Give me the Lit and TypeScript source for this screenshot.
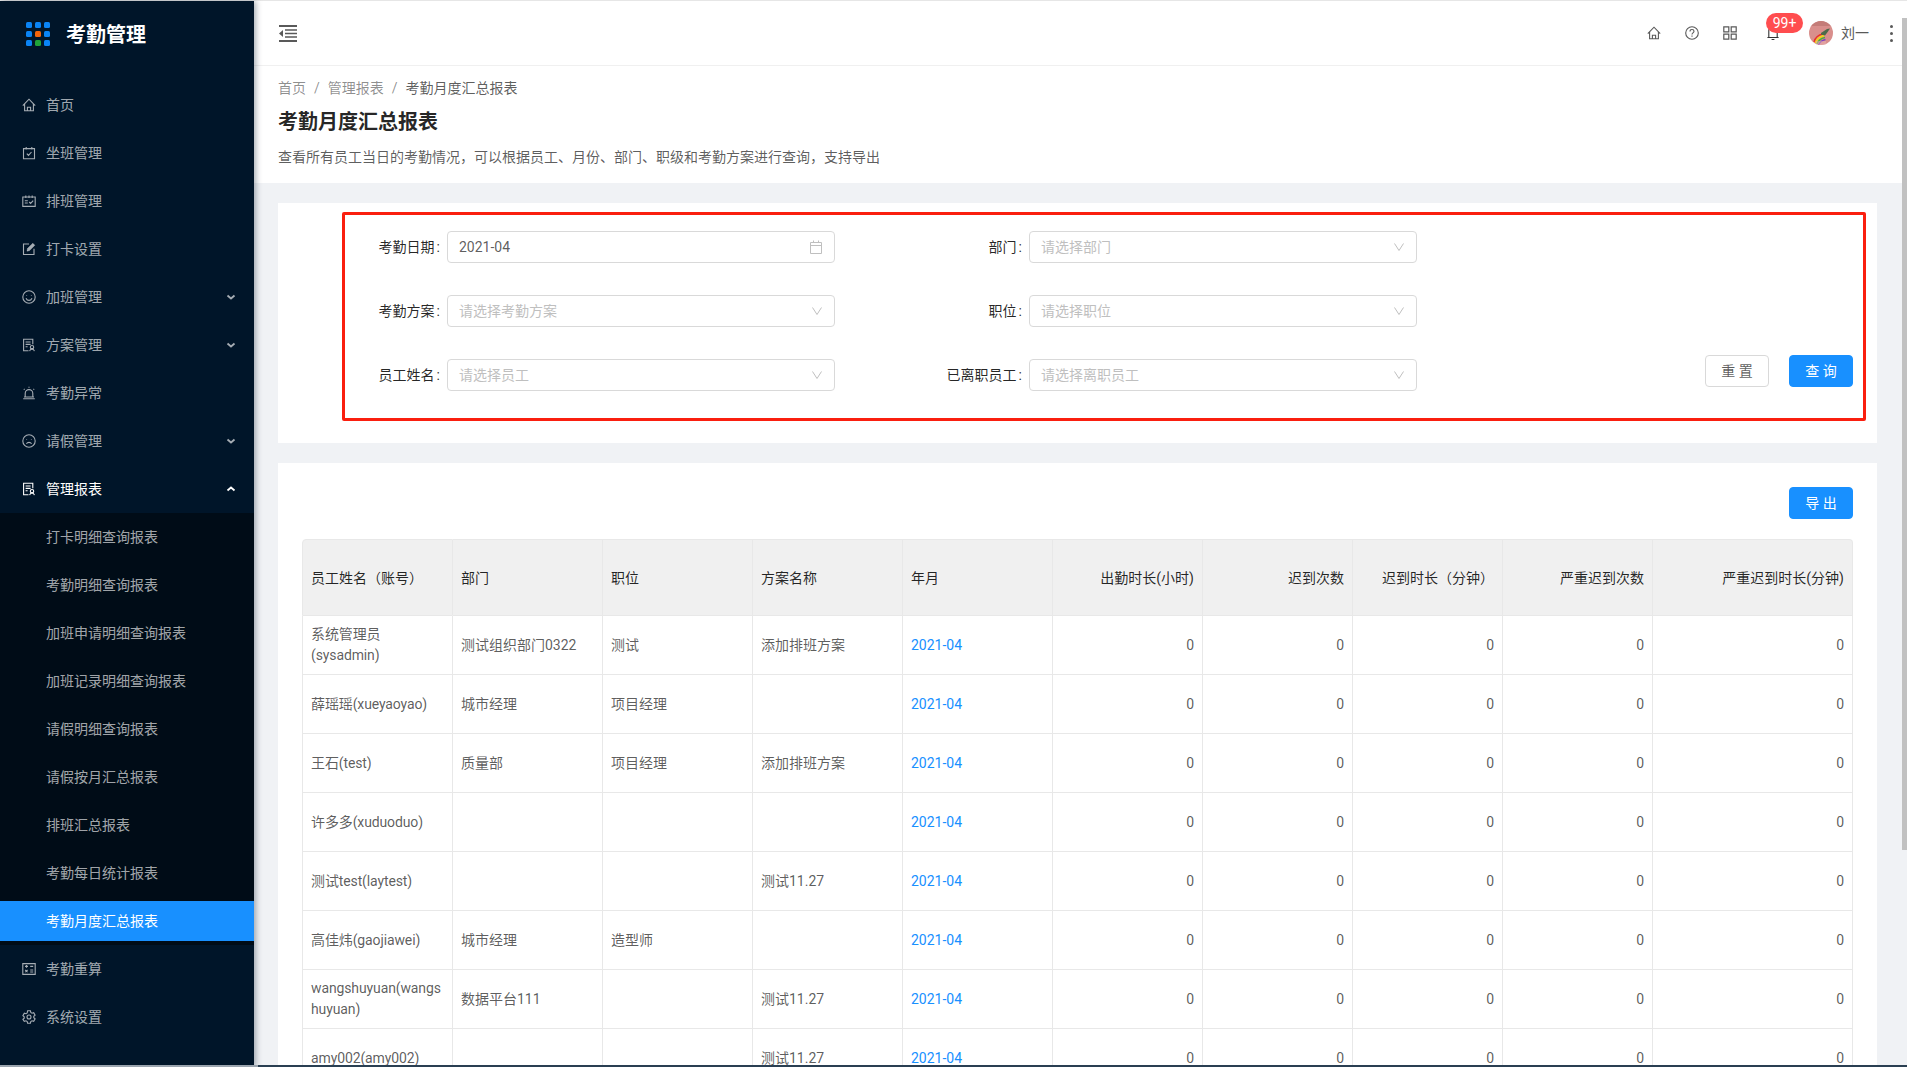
import { LitElement, css, html, svg } from "lit";
import { customElement } from "lit/decorators.js";

const icons: Record<string, unknown> = {
  home: svg`<path d="M.8 7.6 7 1.2l6.200 6.400M2.600 6v6.800h8.800V6M5.400 12.800V9.200h3.200v3.600"/>`,
  sit: svg`<path d="M1.500 2.600h11v10.200h-11zM4.200 1v2.600M9.800 1v2.600M4.800 7.600l1.700 1.800 3-3.400"/>`,
  shift: svg`<path d="M.8 3h12.400v9.400H.8zM3.800 1.400V4M7 1.400V4M10.200 1.400V4M2.800 6.800h3M2.800 9h3M7.200 8l1.400 1.400 2.600-2.800"/>`,
  edit: svg`<path d="M12 6.800v5.700H1.500V2H7"/><path d="M5 9.200l.5-2.700L10.800 1.200l2 2-5.200 5.400z" fill="currentColor" stroke-width=".4"/>`,
  smile: svg`<circle cx="7" cy="7" r="6.200"/><path d="M4 8.200c.7 1.500 1.800 2.200 3 2.200s2.300-.7 3-2.200M4.600 5.200v.6M9.400 5.200v.6"/>`,
  frown: svg`<circle cx="7" cy="7" r="6.200"/><path d="M4.400 9.800c.6-.9 1.500-1.400 2.600-1.400s2 .5 2.600 1.400M4.600 5.400v.6M9.400 5.400v.6"/>`,
  doc: svg`<path d="M6.500 12.800H1.600V1.200h9.200v5M3.600 4h5M3.600 6.400h5M3.600 8.800h2"/><circle cx="10" cy="9.200" r="1.700"/><path d="M7.600 13.200c.3-1.400 1.200-2.200 2.400-2.200s2.100.8 2.400 2.200"/>`,
  alarm: svg`<path d="M3.200 11V7.400a3.800 3.800 0 0 1 7.600 0V11M1.200 12.800h11.600M2 11h10M7 .8v1M1.800 3l.8.7M12.200 3l-.8.7"/>`,
  calc: svg`<path d="M.8 1.600h12.400v10.800H.8zM3 4.400h3M4.500 3v2.800M8.200 4.400h3M3.200 8l2.400 2.200M5.600 8l-2.400 2.200M8.200 8h3M8.200 10h3"/>`,
  gear: svg`<path d="M5.600 1h2.800l.4 1.700 1.200.7 1.700-.5 1.400 2.400-1.300 1.200v1.400l1.300 1.200-1.400 2.400-1.700-.5-1.200.7-.4 1.700H5.600l-.4-1.700-1.200-.7-1.700.5L.9 9.600l1.300-1.200V7L.9 5.800l1.400-2.400 1.700.5 1.200-.7z" transform="translate(0 -.2)"/><circle cx="7" cy="7" r="2"/>`,
};

const menu = [
  { label: "首页", icon: "home" },
  { label: "坐班管理", icon: "sit" },
  { label: "排班管理", icon: "shift" },
  { label: "打卡设置", icon: "edit" },
  { label: "加班管理", icon: "smile", arrow: "down" },
  { label: "方案管理", icon: "doc", arrow: "down" },
  { label: "考勤异常", icon: "alarm" },
  { label: "请假管理", icon: "frown", arrow: "down" },
  { label: "管理报表", icon: "doc", arrow: "up", open: true },
];

const subMenu = [
  "打卡明细查询报表",
  "考勤明细查询报表",
  "加班申请明细查询报表",
  "加班记录明细查询报表",
  "请假明细查询报表",
  "请假按月汇总报表",
  "排班汇总报表",
  "考勤每日统计报表",
  "考勤月度汇总报表",
];

const menuEnd = [
  { label: "考勤重算", icon: "calc" },
  { label: "系统设置", icon: "gear" },
];

const columns = [
  "员工姓名（账号）",
  "部门",
  "职位",
  "方案名称",
  "年月",
  "出勤时长(小时)",
  "迟到次数",
  "迟到时长（分钟）",
  "严重迟到次数",
  "严重迟到时长(分钟)",
];

const rows = [
  ["系统管理员(sysadmin)", "测试组织部门0322", "测试", "添加排班方案"],
  ["薛瑶瑶(xueyaoyao)", "城市经理", "项目经理", ""],
  ["王石(test)", "质量部", "项目经理", "添加排班方案"],
  ["许多多(xuduoduo)", "", "", ""],
  ["测试test(laytest)", "", "", "测试11.27"],
  ["高佳炜(gaojiawei)", "城市经理", "造型师", ""],
  ["wangshuyuan(wangshuyuan)", "数据平台111", "", "测试11.27"],
  ["amy002(amy002)", "", "", "测试11.27"],
];

const filters = [
  { label: "考勤日期", value: "2021-04", kind: "date" },
  { label: "部门", placeholder: "请选择部门" },
  { label: "考勤方案", placeholder: "请选择考勤方案" },
  { label: "职位", placeholder: "请选择职位" },
  { label: "员工姓名", placeholder: "请选择员工" },
  { label: "已离职员工", placeholder: "请选择离职员工" },
];

@customElement("app-root")
export class AppRoot extends LitElement {
  static styles = css`
    :host {
      display: block;
      height: 100vh;
      overflow: hidden;
      position: relative;
      font-family: Roboto, "Noto Sans CJK SC", sans-serif;
      font-size: 14px;
      line-height: 21px;
      color: rgba(0, 0, 0, 0.65);
      background: #f0f2f5;
    }
    svg {
      display: block;
      flex: none;
    }
    .layout {
      display: flex;
      height: 100%;
      box-sizing: border-box;
      border-top: 1px solid #e6e6e6;
    }
    .side {
      width: 254px;
      flex: none;
      background: #001529;
      color: rgba(255, 255, 255, 0.65);
      box-shadow: 2px 0 6px rgba(0, 21, 41, 0.35);
      position: relative;
      z-index: 2;
    }
    .logo {
      height: 84px;
      box-sizing: border-box;
      padding: 21px 0 0 26px;
      display: flex;
      gap: 16px;
      align-items: flex-start;
    }
    .dots {
      display: grid;
      grid-template-columns: repeat(3, 6px);
      grid-auto-rows: 6px;
      gap: 3px;
    }
    .dots i {
      background: #0a84f5;
      border-radius: 1.5px;
    }
    .dots .o {
      background: #f5640a;
    }
    .dots .g {
      background: #1fa33a;
    }
    .logo-name {
      color: #fff;
      font-size: 20px;
      font-weight: 700;
      line-height: 26px;
    }
    .item {
      height: 40px;
      margin-bottom: 8px;
      display: flex;
      align-items: center;
      padding: 0 18px 0 22px;
    }
    .item .label {
      margin-left: 10px;
      flex: 1;
    }
    .item.open {
      color: #fff;
      margin-bottom: 0;
    }
    .sub {
      background: #000c17;
      margin: 4px 0;
      padding: 4px 0;
    }
    .sub div {
      height: 40px;
      line-height: 40px;
      padding-left: 46px;
      margin-bottom: 8px;
    }
    .sub div:last-child {
      margin-bottom: 0;
    }
    .sub .active {
      background: #1890ff;
      color: #fff;
    }
    .main {
      flex: 1;
      min-width: 0;
    }
    .top {
      height: 65px;
      box-sizing: border-box;
      background: #fff;
      border-bottom: 1px solid #f0f0f0;
      display: flex;
      align-items: center;
      padding: 0 14px 0 25px;
      color: #595959;
    }
    .grow {
      flex: 1;
    }
    .act {
      width: 38px;
      display: flex;
      justify-content: center;
    }
    .bell {
      width: 49px;
      position: relative;
      color: #333;
      padding-right: 2px;
      box-sizing: border-box;
    }
    .badge {
      position: absolute;
      left: 17px;
      top: -12px;
      width: 37px;
      height: 20px;
      border-radius: 10px;
      background: #ff4d4f;
      color: #fff;
      font-size: 14px;
      line-height: 20px;
      text-align: center;
    }
    .avatar {
      margin-left: 11px;
    }
    .user {
      margin-left: 8px;
      width: 36px;
    }
    .kebab {
      display: grid;
      gap: 4px;
      margin-left: 13px;
    }
    .kebab i {
      width: 3px;
      height: 3px;
      border-radius: 50%;
      background: #595959;
    }
    .page-head {
      background: #fff;
      height: 117px;
      box-sizing: border-box;
      padding: 12px 24px 0;
    }
    .crumbs {
      display: flex;
      gap: 8px;
      color: rgba(0, 0, 0, 0.45);
    }
    .crumbs .now {
      color: rgba(0, 0, 0, 0.65);
    }
    .title {
      margin: 8px 0 0;
      font-size: 20px;
      line-height: 30px;
      font-weight: 600;
      color: rgba(0, 0, 0, 0.85);
    }
    .desc {
      margin: 10px 0 0;
    }
    .filter-card {
      background: #fff;
      margin: 20px 30px 0 24px;
      height: 240px;
      box-sizing: border-box;
      padding: 9px 11px 0 64px;
    }
    .filter {
      height: 209px;
      box-sizing: border-box;
      border: 3px solid #fa1f0f;
      border-radius: 2px;
      padding-top: 16px;
      display: grid;
      grid-template-columns: 102px 388px 194px 388px 1fr;
      grid-auto-rows: 32px;
      row-gap: 32px;
      align-items: center;
    }
    .filter label {
      text-align: right;
      padding-right: 7px;
      color: rgba(0, 0, 0, 0.85);
    }
    .colon {
      margin-left: 2px;
    }
    .input {
      height: 32px;
      box-sizing: border-box;
      border: 1px solid #d9d9d9;
      border-radius: 4px;
      display: flex;
      align-items: center;
      justify-content: space-between;
      padding: 0 12px 0 11px;
    }
    .placeholder {
      color: #bfbfbf;
    }
    .input svg {
      color: #bfbfbf;
    }
    .gap {
      grid-column: 5;
    }
    .actions {
      grid-column: 5;
      display: flex;
      justify-content: flex-end;
      gap: 20px;
      padding-right: 10px;
      margin-top: -8px;
    }
    .btn {
      width: 64px;
      height: 32px;
      box-sizing: border-box;
      border: 1px solid #d9d9d9;
      border-radius: 4px;
      text-align: center;
      line-height: 30px;
      background: #fff;
    }
    .btn.primary {
      background: #1890ff;
      border-color: #1890ff;
      color: #fff;
    }
    .table-card {
      background: #fff;
      margin: 20px 30px 0 24px;
      padding: 24px 24px 0 24px;
    }
    .tools {
      display: flex;
      justify-content: flex-end;
      margin-bottom: 20px;
    }
    table {
      table-layout: fixed;
      width: 1551px;
      border-collapse: separate;
      border-spacing: 0;
    }
    th,
    td {
      box-sizing: border-box;
      padding: 8px;
      border-right: 1px solid #e8e8e8;
      border-bottom: 1px solid #e8e8e8;
      text-align: left;
      font-weight: 400;
      overflow-wrap: break-word;
    }
    th:first-child,
    td:first-child {
      border-left: 1px solid #e8e8e8;
    }
    td:first-child {
      letter-spacing: -0.12px;
    }
    th {
      height: 77px;
      background: #f0f0f0;
      border-top: 1px solid #e8e8e8;
      padding-top: 10px;
      color: rgba(0, 0, 0, 0.85);
    }
    th:first-child {
      border-top-left-radius: 4px;
    }
    th:last-child {
      border-top-right-radius: 4px;
    }
    td {
      height: 59px;
    }
    .num {
      text-align: right;
    }
    .link {
      color: #1890ff;
    }
    .thumb {
      position: absolute;
      right: 0;
      top: 18px;
      width: 5px;
      height: 832px;
      background: #c1c1c1;
      z-index: 3;
    }
    .edge {
      position: absolute;
      left: 0;
      right: 0;
      bottom: 0;
      height: 2px;
      background: linear-gradient(to right, #9aa4ae 258px, #2a3f52 258px);
      z-index: 3;
    }
  `;

  private menuIcon(name: string) {
    return html`<svg width="14" height="14" viewBox="0 0 14 14" fill="none" stroke="currentColor" stroke-width="1.1">${icons[name]}</svg>`;
  }

  private chevron(up: boolean) {
    return html`<svg width="10" height="10" viewBox="0 0 10 10" fill="none" stroke="currentColor" stroke-width="1.8">
      <path d=${up ? "M1.5 6.5 5 3.5l3.5 3" : "M1.5 3.5 5 6.5l3.5-3"} />
    </svg>`;
  }

  private menuItem(m: { label: string; icon: string; arrow?: string; open?: boolean }) {
    return html`<div class="item ${m.open ? "open" : ""}">
      ${this.menuIcon(m.icon)}<span class="label">${m.label}</span>
      ${m.arrow ? this.chevron(m.arrow === "up") : ""}
    </div>`;
  }

  private renderSide() {
    return html`<aside class="side">
      <div class="logo">
        <div class="dots">
          <i></i><i></i><i></i><i></i><i class="o"></i><i></i><i></i><i class="g"></i><i></i>
        </div>
        <span class="logo-name">考勤管理</span>
      </div>
      ${menu.map((m) => this.menuItem(m))}
      <div class="sub">
        ${subMenu.map((s, i) => html`<div class=${i === subMenu.length - 1 ? "active" : ""}>${s}</div>`)}
      </div>
      ${menuEnd.map((m) => this.menuItem(m))}
    </aside>`;
  }

  private renderTop() {
    return html`<header class="top">
      <svg width="18" height="17" viewBox="0 0 18 17" fill="#595959">
        <path d="M0 0h18v2H0zM0 15h18v2H0zM6 4.200h12v1.600H6zM6 7.700h12v1.600H6zM6 11.200h12v1.600H6zM4 5v7L0 8.500z" />
      </svg>
      <div class="grow"></div>
      <div class="act">${this.menuIcon("home")}</div>
      <div class="act">
        <svg width="14" height="14" viewBox="0 0 14 14" fill="none" stroke="currentColor" stroke-width="1.1">
          <circle cx="7" cy="7" r="6.300" />
          <path d="M5 5.400C5 4.200 5.900 3.500 7 3.500s2 .7 2 1.800c0 1.500-2 1.600-2 3.100" />
          <path d="M7 9.600v1.200" />
        </svg>
      </div>
      <div class="act">
        <svg width="14" height="14" viewBox="0 0 14 14" fill="none" stroke="currentColor" stroke-width="1.2">
          <path d="M.8.800h5v5h-5zM8.200.800h5v5h-5zM.8 8.200h5v5h-5zM8.200 8.200h5v5h-5z" />
        </svg>
      </div>
      <div class="act bell">
        <svg width="12" height="16" viewBox="0 0 12 16" fill="none" stroke="currentColor" stroke-width="1.1">
          <path d="M1.800 12.500V5.600a4.200 4.200 0 0 1 8.400 0v6.900M.4 12.500h11.200M4.600 14.500h2.800" />
        </svg>
        <span class="badge">99+</span>
      </div>
      <svg class="avatar" width="24" height="24" viewBox="0 0 24 24">
        <clipPath id="av"><circle cx="12" cy="12" r="12" /></clipPath>
        <g clip-path="url(#av)" fill="none">
          <rect width="24" height="24" fill="#d98f8c" />
          <path d="M0 0h24v5H0z" fill="#c47c78" />
          <path d="M5 21c1-4 4-7 9-8" stroke="#e8352a" stroke-width="1.400" />
          <path d="M6.500 22c1-4 3.500-6 8.500-7.500" stroke="#f5d90a" stroke-width="1.400" />
          <path d="M8 23c1-3 3.500-5.500 8-6.500" stroke="#4caf3a" stroke-width="1.400" />
          <path d="M9.500 24c1-3 3-4.500 7-5.500" stroke="#7a3fc0" stroke-width="1.400" />
          <path d="M12 12l6-4 3-.5-2 3-3 4-4-1z" fill="#4d6a4a" />
          <path d="M7 20h10v4H7z" fill="#e9b3b3" opacity=".5" />
        </g>
      </svg>
      <span class="user">刘一</span>
      <div class="kebab"><i></i><i></i><i></i></div>
    </header>`;
  }

  private renderFilters() {
    return html`<section class="filter-card">
      <div class="filter">
        ${filters.map(
          (f) => html`<label>${f.label}<span class="colon">:</span></label>
            <div class="input">
              ${f.kind === "date"
                ? html`<span>${f.value}</span>
                    <svg width="12" height="14" viewBox="0 0 12 14" fill="none" stroke="currentColor">
                      <path d="M.5 2.500h11v11H.5zM.5 5.500h11M3.500.5v2M8.500.5v2" />
                    </svg>`
                : html`<span class="placeholder">${f.placeholder}</span>
                    <svg width="10" height="8" viewBox="0 0 10 8" fill="none" stroke="currentColor">
                      <path d="M.5.500 5 7.500 9.500.5" />
                    </svg>`}
            </div>`
        ).reduce<unknown[]>((acc, cell, i) => {
          acc.push(cell);
          if (i === 1 || i === 3) acc.push(html`<div class="gap"></div>`);
          return acc;
        }, [])}
        <div class="actions">
          <div class="btn">重 置</div>
          <div class="btn primary">查 询</div>
        </div>
      </div>
    </section>`;
  }

  private renderTable() {
    return html`<section class="table-card">
      <div class="tools"><div class="btn primary">导 出</div></div>
      <table>
        <colgroup>
          ${columns.map((_, i) => html`<col style="width:${i === 0 ? 151 : i === 9 ? 200 : 150}px" />`)}
        </colgroup>
        <thead>
          <tr>
            ${columns.map((c, i) => html`<th class=${i > 4 ? "num" : ""}>${c}</th>`)}
          </tr>
        </thead>
        <tbody>
          ${rows.map(
            (r) => html`<tr>
              ${r.map((c) => html`<td>${c}</td>`)}
              <td class="link">2021-04</td>
              ${[0, 1, 2, 3, 4].map(() => html`<td class="num">0</td>`)}
            </tr>`
          )}
        </tbody>
      </table>
    </section>`;
  }

  render() {
    return html`<div class="layout">
        ${this.renderSide()}
        <main class="main">
          ${this.renderTop()}
          <div class="page-head">
            <div class="crumbs">
              <span>首页</span><span>/</span><span>管理报表</span><span>/</span><span class="now">考勤月度汇总报表</span>
            </div>
            <h1 class="title">考勤月度汇总报表</h1>
            <p class="desc">查看所有员工当日的考勤情况，可以根据员工、月份、部门、职级和考勤方案进行查询，支持导出</p>
          </div>
          ${this.renderFilters()} ${this.renderTable()}
        </main>
      </div>
      <div class="thumb"></div>
      <div class="edge"></div>`;
  }
}
